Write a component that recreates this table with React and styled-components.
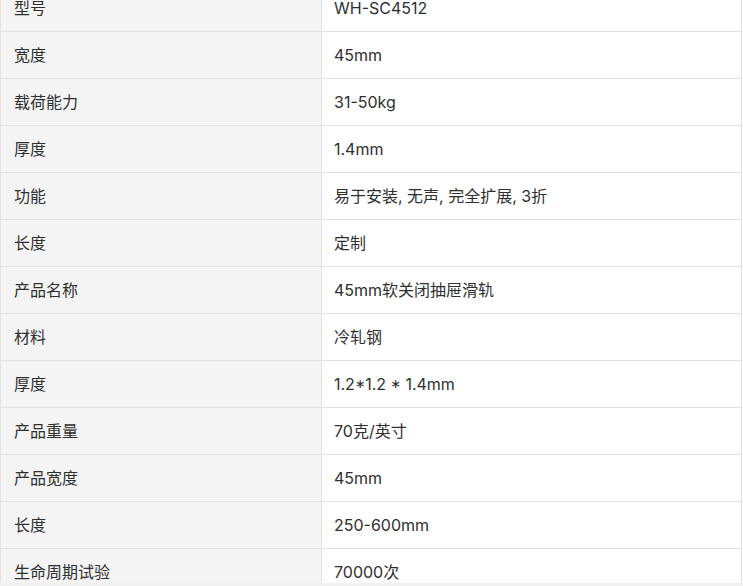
import React from "react";
import styled, { createGlobalStyle } from "styled-components";

const GlobalStyle = createGlobalStyle`
  html, body {
    margin: 0;
    padding: 0;
    background: #ffffff;
  }
  body {
    font-family: "Inter", "Noto Sans CJK SC", sans-serif;
    color: #333333;
  }
`;

const Frame = styled.div`
  height: 583px;
  overflow: hidden;
`;

const SpecTable = styled.table`
  width: 742px;
  margin-top: -16px;
  border-collapse: collapse;
  table-layout: fixed;
  font-size: 16px;
`;

const Row = styled.tr`
  height: 47px;
`;

const Cell = styled.td`
  border: 1px solid #e1e1e1;
  padding: 0 12px 0 ${({ $label }) => ($label ? "13px" : "12px")};
  line-height: 22px;
  vertical-align: middle;
  color: #2f2f2f;
  background: ${({ $label }) => ($label ? "#f4f4f4" : "#ffffff")};
  width: ${({ $label }) => ($label ? "295px" : "auto")};
`;

const BottomStrip = styled.div`
  height: 3px;
  background: #f1f1f1;
`;

const specs = [
  ["型号", "WH-SC4512"],
  ["宽度", "45mm"],
  ["载荷能力", "31-50kg"],
  ["厚度", "1.4mm"],
  ["功能", "易于安装, 无声, 完全扩展, 3折"],
  ["长度", "定制"],
  ["产品名称", "45mm软关闭抽屉滑轨"],
  ["材料", "冷轧钢"],
  ["厚度", "1.2*1.2 * 1.4mm"],
  ["产品重量", "70克/英寸"],
  ["产品宽度", "45mm"],
  ["长度", "250-600mm"],
  ["生命周期试验", "70000次"],
];

export default function App() {
  return (
    <>
      <GlobalStyle />
      <Frame>
        <SpecTable>
          <tbody>
            {specs.map(([label, value], i) => (
              <Row key={i}>
                <Cell $label>{label}</Cell>
                <Cell>{value}</Cell>
              </Row>
            ))}
          </tbody>
        </SpecTable>
      </Frame>
      <BottomStrip />
    </>
  );
}
